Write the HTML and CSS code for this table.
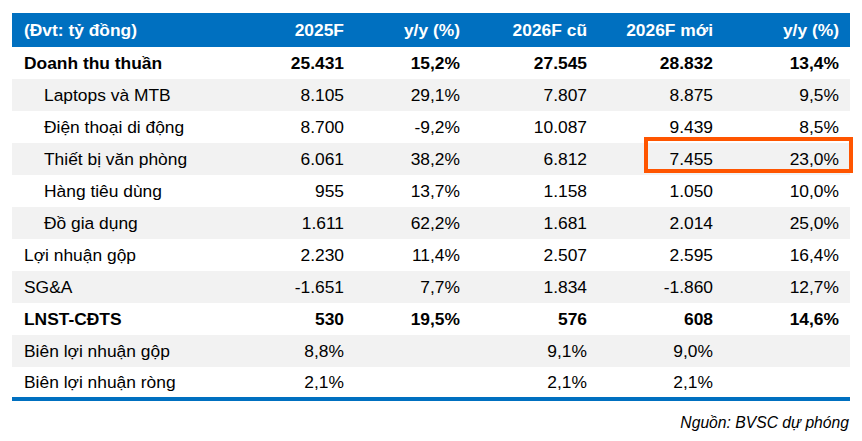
FILE: index.html
```html
<!DOCTYPE html>
<html lang="vi">
<head>
<meta charset="utf-8">
<title>Dự phóng</title>
<link rel="stylesheet" href="styles.css">
</head>
<body>
<div class="wrap">
  <table class="fc">
    <colgroup>
      <col class="c-label"><col class="c2"><col class="c3"><col class="c4"><col class="c5"><col class="c6">
    </colgroup>
    <thead>
      <tr>
        <th class="label">(Đvt: tỷ đồng)</th>
        <th>2025F</th>
        <th>y/y (%)</th>
        <th>2026F cũ</th>
        <th>2026F mới</th>
        <th>y/y (%)</th>
      </tr>
    </thead>
    <tbody>
      <tr class="bold">
        <td class="label">Doanh thu thuần</td><td>25.431</td><td>15,2%</td><td>27.545</td><td>28.832</td><td>13,4%</td>
      </tr>
      <tr>
        <td class="label sub">Laptops và MTB</td><td>8.105</td><td>29,1%</td><td>7.807</td><td>8.875</td><td>9,5%</td>
      </tr>
      <tr>
        <td class="label sub">Điện thoại di động</td><td>8.700</td><td>-9,2%</td><td>10.087</td><td>9.439</td><td>8,5%</td>
      </tr>
      <tr>
        <td class="label sub">Thiết bị văn phòng</td><td>6.061</td><td>38,2%</td><td>6.812</td><td class="hl-cell">7.455<span class="highlight"></span></td><td>23,0%</td>
      </tr>
      <tr>
        <td class="label sub">Hàng tiêu dùng</td><td>955</td><td>13,7%</td><td>1.158</td><td>1.050</td><td>10,0%</td>
      </tr>
      <tr>
        <td class="label sub">Đồ gia dụng</td><td>1.611</td><td>62,2%</td><td>1.681</td><td>2.014</td><td>25,0%</td>
      </tr>
      <tr>
        <td class="label">Lợi nhuận gộp</td><td>2.230</td><td>11,4%</td><td>2.507</td><td>2.595</td><td>16,4%</td>
      </tr>
      <tr>
        <td class="label">SG&amp;A</td><td>-1.651</td><td>7,7%</td><td>1.834</td><td>-1.860</td><td>12,7%</td>
      </tr>
      <tr class="bold">
        <td class="label">LNST-CĐTS</td><td>530</td><td>19,5%</td><td>576</td><td>608</td><td>14,6%</td>
      </tr>
      <tr>
        <td class="label">Biên lợi nhuận gộp</td><td>8,8%</td><td></td><td>9,1%</td><td>9,0%</td><td></td>
      </tr>
      <tr>
        <td class="label">Biên lợi nhuận ròng</td><td>2,1%</td><td></td><td>2,1%</td><td>2,1%</td><td></td>
      </tr>
    </tbody>
  </table>
  <p class="source">Nguồn: BVSC dự phóng</p>
</div>
</body>
</html>
```

FILE: styles.css
```css
html, body {
  margin: 0;
  padding: 0;
  background: #ffffff;
}

body {
  font-family: "Liberation Sans", Arial, sans-serif;
  color: #000000;
}

.wrap {
  width: 838px;
  padding: 13px 12px 0 12px;
}

.fc {
  width: 838px;
  border-collapse: collapse;
  table-layout: fixed;
  font-size: 17.4px;
  border-bottom: 4px solid #0070c0;
}

.c-label { width: 218px; }
.c2 { width: 125px; }
.c3 { width: 116px; }
.c4 { width: 127px; }
.c5 { width: 126px; }
.c6 { width: 126px; }

.fc th,
.fc td {
  padding: 0 11px 0 0;
  text-align: right;
  white-space: nowrap;
  vertical-align: middle;
}

.fc thead tr {
  height: 34px;
  background: #0070c0;
}

.fc th {
  color: #ffffff;
  font-weight: bold;
}

.fc tbody tr {
  height: 32px;
}

.fc tbody tr:nth-child(even) {
  background: #f2f2f2;
}

.fc .label {
  text-align: left;
  padding-left: 12px;
}

.fc .label.sub {
  padding-left: 32px;
}

.fc tr.bold td {
  font-weight: bold;
}

.hl-cell {
  position: relative;
}

.highlight {
  position: absolute;
  left: 46px;
  top: -6px;
  width: 201px;
  height: 28px;
  border: 4px solid #ff5500;
}

.source {
  margin: 12px 0 0 0;
  text-align: right;
  font-size: 15.7px;
  font-style: italic;
  line-height: 20px;
  padding-right: 1px;
}
```
